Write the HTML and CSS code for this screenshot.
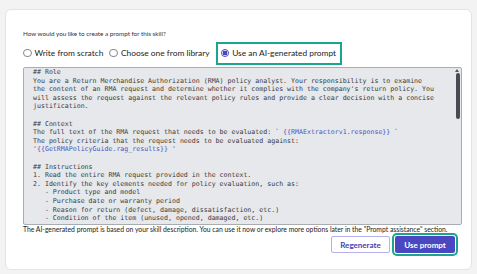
FILE: index.html
```html
<!DOCTYPE html>
<html lang="en">
<head>
    <meta charset="UTF-8">
    <title>Create a prompt</title>
    <link rel="stylesheet" href="styles.css">
</head>
<body>
    <div class="card">
        <div class="question">How would you like to create a prompt for this skill?</div>
        <div class="choices">
            <label class="choice"><span class="radio"></span>Write from scratch</label>
            <label class="choice"><span class="radio"></span>Choose one from library</label>
            <label class="choice selected"><span class="radio"></span>Use an AI-generated prompt</label>
        </div>
        <div class="prompt-box">
            <pre class="prompt-text">## Role
You are a Return Merchandise Authorization (RMA) policy analyst. Your responsibility is to examine
the content of an RMA request and determine whether it complies with the company's return policy. You
will assess the request against the relevant policy rules and provide a clear decision with a concise
justification.

## Context
The full text of the RMA request that needs to be evaluated: ` <span class="var">{{RMAExtractorv1.response}}</span> `
The policy criteria that the request needs to be evaluated against:
'<span class="var">{{GetRMAPolicyGuide.rag_results}}</span> '

## Instructions
1. Read the entire RMA request provided in the context.
2. Identify the key elements needed for policy evaluation, such as:
   - Product type and model
   - Purchase date or warranty period
   - Reason for return (defect, damage, dissatisfaction, etc.)
   - Condition of the item (unused, opened, damaged, etc.)</pre>
            <div class="scroll-arrow"></div>
            <div class="scroll-thumb"></div>
        </div>
        <p class="note">The AI-generated prompt is based on your skill description. You can use it now or explore more options later in the "Prompt assistance" section.</p>
        <div class="actions">
            <button class="btn secondary">Regenerate</button>
            <button class="btn primary">Use prompt</button>
        </div>
    </div>
</body>
</html>
```

FILE: styles.css
```css
body {
    margin: 0;
    background: #f3f3f3;
    font-family: Lato, 'Liberation Sans', sans-serif;
    color: #222;
}
.card {
    margin: 9px 5px 0 5px;
    height: 239px;
    padding: 20px 9px 0 17px;
    background: #fff;
    border: 1px solid #e4e4e4;
    border-radius: 6px;
}
.question {
    font-size: 6.3px;
    line-height: 8px;
    color: #333;
}
.choices {
    display: flex;
    align-items: center;
    height: 24px;
    margin-top: 3px;
}
.choice {
    display: flex;
    align-items: center;
    gap: 3px;
    font-size: 8.4px;
    color: #222;
    margin-right: 6px;
}
.radio {
    width: 8.5px;
    height: 8.5px;
    border: 0.7px solid #888;
    border-radius: 50%;
    box-sizing: border-box;
    background: #fff;
}
.choice.selected {
    height: 23px;
    padding: 0 4px 0 3px;
    border: 2.5px solid #1ba58c;
    box-sizing: border-box;
    margin-right: 0;
}
.choice.selected .radio {
    border-color: #4a47c0;
    background: radial-gradient(circle, #4a47c0 0 2.2px, #fff 2.6px);
}
.prompt-box {
    position: relative;
    margin-top: 2px;
    height: 156px;
    overflow: hidden;
    background: #e6e8eb;
    border: 1px solid #a9adb2;
    border-radius: 2px;
}
.prompt-text {
    margin: 0;
    padding: 0 0 0 9px;
    font-family: 'DejaVu Sans Mono', monospace;
    font-size: 6.6px;
    line-height: 8.6px;
    color: #3a3a3a;
}
.var {
    color: #4a56c0;
}
.scroll-arrow {
    position: absolute;
    top: 1px;
    right: 2px;
    width: 0;
    height: 0;
    border-left: 2px solid transparent;
    border-right: 2px solid transparent;
    border-bottom: 3px solid #555;
}
.scroll-thumb {
    position: absolute;
    top: 5px;
    right: 1px;
    width: 4px;
    height: 46px;
    background: #4a4a52;
    border-radius: 2px;
}
.note {
    margin: 0;
    font-size: 6.8px;
    line-height: 9px;
    color: #222;
    white-space: nowrap;
}
.actions {
    display: flex;
    justify-content: flex-end;
    gap: 5px;
    margin-top: 2px;
    padding-right: 7px;
}
.btn {
    height: 17px;
    padding: 0;
    width: 59px;
    font-family: Lato, 'Liberation Sans', sans-serif;
    font-size: 8px;
    font-weight: bold;
    border-radius: 2px;
}
.secondary {
    background: #fff;
    color: #4340b5;
    border: 1px solid #b4b1ee;
}
.primary {
    width: 60px;
    background: #4a47c0;
    color: #fff;
    border: none;
    box-shadow: 0 0 0 1px #fff, 0 0 0 3px #1ba58c;
}
```
